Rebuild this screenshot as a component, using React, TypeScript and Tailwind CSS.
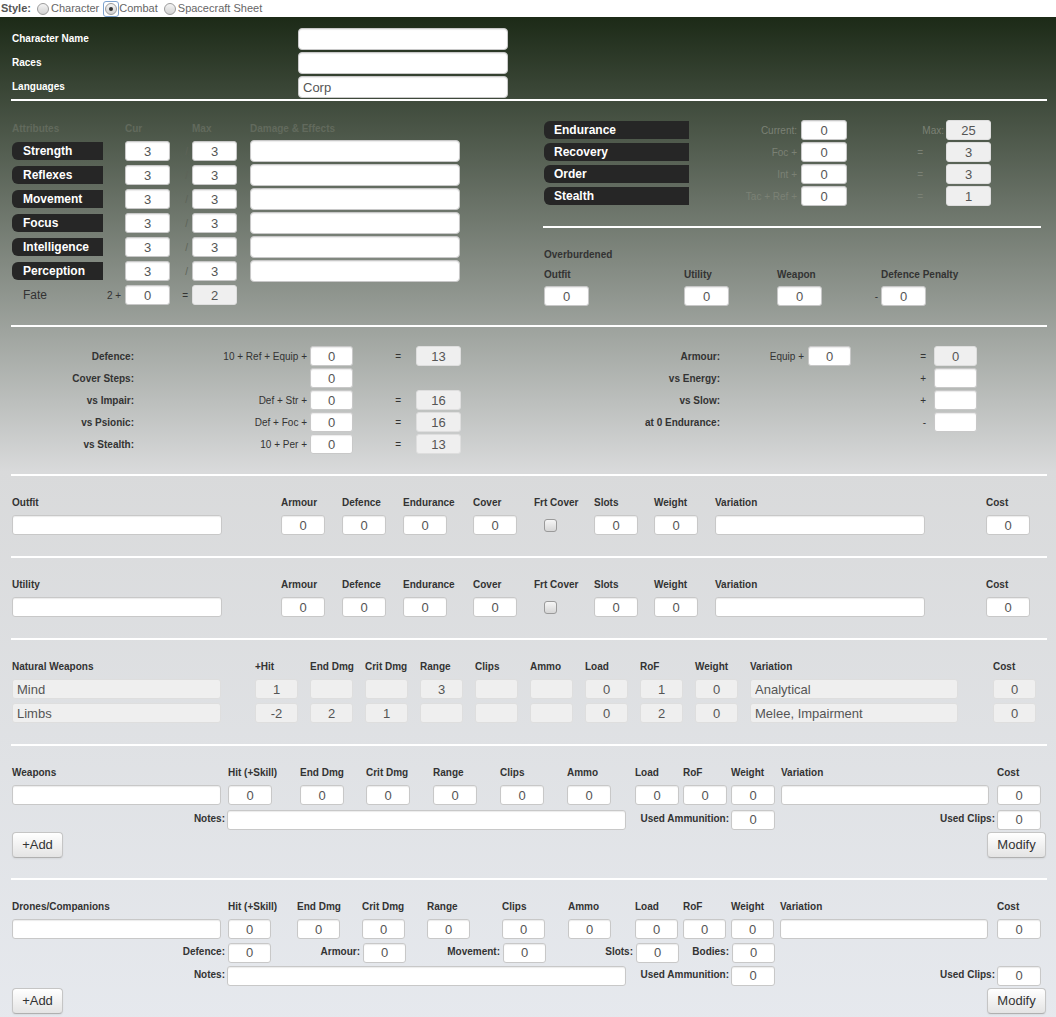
import React from "react";

const base = "h-[20px] shrink-0 rounded-[3px] border text-[13px] text-[#555] outline-none";
const whiteBox = "border-[#c8c8c8] bg-white shadow-[inset_0_1px_1px_rgba(0,0,0,0.08)]";
const roBox = "border-[#dedede] bg-[#efefef]";

type BoxProps = { v?: string; w?: string; ro?: boolean; left?: boolean; tall?: boolean };

function Box({ v = "0", w = "w-[44px]", ro = false, left = false, tall = false }: BoxProps) {
  return (
    <input
      defaultValue={v}
      readOnly={ro}
      className={`${base} ${ro ? roBox : whiteBox} ${w} ${left ? "px-[4px] text-left" : "text-center"} ${tall ? "h-[22px] rounded-[4px]" : ""}`}
    />
  );
}

function Line() {
  return <div className="ml-[-1px] h-[2px] bg-white" />;
}

function Pill({ children, w }: { children: React.ReactNode; w: string }) {
  return (
    <div className={`${w} h-[18px] shrink-0 rounded-l-[6px] bg-[#262626] text-[12px] font-bold leading-[18px] text-white`}>
      {children}
    </div>
  );
}

function Radio({ on = false }: { on?: boolean }) {
  return (
    <span
      className={`ml-[5px] mr-[1px] flex h-[14px] w-[14px] items-center justify-center ${on ? "rounded-[2px] outline outline-1 outline-[#7da2ce]" : ""}`}
    >
      <span className="flex h-[12px] w-[12px] items-center justify-center rounded-full border border-[#9c9c9c] bg-linear-to-b from-[#f4f4f4] to-[#d2d2d2]">
        {on && <span className="h-[4px] w-[4px] rounded-full bg-[#333]" />}
      </span>
    </span>
  );
}

function Btn({ children, w }: { children: React.ReactNode; w: string }) {
  return (
    <button
      className={`${w} h-[26px] rounded-[4px] border border-[#c5c5c5] border-b-[#b0b0b0] bg-linear-to-b from-white to-[#e4e4e4] text-[13px] text-[#333] shadow-[0_1px_2px_rgba(0,0,0,0.06)]`}
    >
      {children}
    </button>
  );
}

const head = "text-[10px] font-bold leading-[12px] text-[#333]";

const attrs = ["Strength", "Reflexes", "Movement", "Focus", "Intelligence", "Perception"];

const derived = [
  { name: "Endurance", label: "Current:", v: "0", mid: "Max:", res: "25" },
  { name: "Recovery", label: "Foc +", v: "0", mid: "=", res: "3" },
  { name: "Order", label: "Int +", v: "0", mid: "=", res: "3" },
  { name: "Stealth", label: "Tac + Ref +", v: "0", mid: "=", res: "1" },
];

const defLeft = [
  { l: "Defence:", f: "10 + Ref + Equip +", r: "13" },
  { l: "Cover Steps:", f: "", r: "" },
  { l: "vs Impair:", f: "Def + Str +", r: "16" },
  { l: "vs Psionic:", f: "Def + Foc +", r: "16" },
  { l: "vs Stealth:", f: "10 + Per +", r: "13" },
];

const defRight = [
  { l: "Armour:", equip: true, s: "=", r: "0" },
  { l: "vs Energy:", equip: false, s: "+", r: "" },
  { l: "vs Slow:", equip: false, s: "+", r: "" },
  { l: "at 0 Endurance:", equip: false, s: "-", r: "" },
];

const natural = [
  ["Mind", "1", "", "", "3", "", "", "0", "1", "0", "Analytical", "0"],
  ["Limbs", "-2", "2", "1", "", "", "", "0", "2", "0", "Melee, Impairment", "0"],
];

function Gear({ title }: { title: string }) {
  const cols = ["Armour", "Defence", "Endurance", "Cover"];
  return (
    <div className="pb-[21px] pt-[21px]">
      <div className="grid grid-cols-[269px_61px_61px_70px_61px_60px_60px_61px_271px_44px] gap-y-[6px]">
        <div className={head}>{title}</div>
        {cols.map((c) => (
          <div key={c} className={head}>{c}</div>
        ))}
        <div className={head}>Frt Cover</div>
        <div className={head}>Slots</div>
        <div className={head}>Weight</div>
        <div className={head}>Variation</div>
        <div className={head}>Cost</div>
        <Box v="" w="w-[210px]" />
        {cols.map((c) => (
          <Box key={c} />
        ))}
        <div className="flex h-[20px] items-center">
          <span className="ml-[10px] h-[13px] w-[13px] rounded-[3px] border border-[#9a9a9a] bg-linear-to-b from-[#f6f6f6] to-[#d6d6d6]" />
        </div>
        <Box />
        <Box />
        <Box v="" w="w-[210px]" />
        <Box />
      </div>
    </div>
  );
}

function NotesRow() {
  return (
    <div className="flex h-[20px] items-center">
      <span className={`${head} w-[213px] text-right`}>Notes:</span>
      <span className="ml-[2px]"><Box v="" w="w-[399px]" /></span>
      <span className={`${head} w-[103px] text-right`}>Used Ammunition:</span>
      <span className="ml-[2px]"><Box /></span>
      <span className={`${head} w-[220px] text-right`}>Used Clips:</span>
      <span className="ml-[2px]"><Box /></span>
    </div>
  );
}

export default function App() {
  return (
    <div className="min-h-screen bg-white font-['Liberation_Sans',Arial,sans-serif]">
      {/* style switch */}
      <div className="flex h-[17px] items-center pl-[1px] text-[11px] text-[#666]">
        <span className="font-bold text-[#555]">Style:</span>
        <Radio />
        <span>Character</span>
        <Radio on />
        <span>Combat</span>
        <Radio />
        <span>Spacecraft Sheet</span>
      </div>

      <div className="bg-[linear-gradient(to_bottom,#1c2a17_0%,#d9dadb_45%,#e6e9ee_100%)] pb-[14px] pl-[12px] pr-[9px]">
        {/* identity */}
        <div className="flex flex-col gap-[2px] pt-[11px]">
          {[
            ["Character Name", ""],
            ["Races", ""],
            ["Languages", "Corp"],
          ].map(([l, v]) => (
            <div key={l} className="flex items-center">
              <span className="mt-[-1px] w-[286px] text-[10px] font-bold text-white">{l}</span>
              <Box v={v} w="w-[210px]" left tall />
            </div>
          ))}
        </div>
        <div className="mt-[1px]">
          <Line />
        </div>

        {/* attributes + derived */}
        <div className="flex">
          <div className="w-[532px] shrink-0 pt-[19px]">
            <div className="flex h-[16px] items-center text-[10px] font-bold text-[#626a5d]">
              <span className="w-[113px]">Attributes</span>
              <span className="w-[67px]">Cur</span>
              <span className="w-[58px]">Max</span>
              <span>Damage &amp; Effects</span>
            </div>
            <div className="mt-[5px] flex flex-col gap-[4px]">
              {attrs.map((a) => (
                <div key={a} className="flex h-[20px] items-center">
                  <Pill w="w-[91px] pl-[11px]">{a}</Pill>
                  <span className="w-[22px]" />
                  <Box v="3" w="w-[45px]" />
                  <span className="flex w-[22px] justify-end pr-[4px] text-[10px] text-[#5d6358]">/</span>
                  <Box v="3" w="w-[45px]" />
                  <span className="w-[13px]" />
                  <Box v="" w="w-[210px]" tall />
                </div>
              ))}
              <div className="flex h-[20px] items-center">
                <span className="mt-[-1px] w-[95px] pl-[11px] text-[12px] text-[#333]">Fate</span>
                <span className="w-[18px] text-[10px] text-[#333]">2 +</span>
                <Box w="w-[45px]" />
                <span className="flex w-[22px] justify-end pr-[4px] text-[10px] text-[#333]">=</span>
                <Box v="2" w="w-[45px]" ro />
              </div>
            </div>
          </div>

          <div className="flex-1 pr-[6px] pt-[19px]">
            <div className="flex flex-col gap-[2px]">
              {derived.map((d) => (
                <div key={d.name} className="flex h-[20px] items-center">
                  <Pill w="w-[145px] pl-[10px]">{d.name}</Pill>
                  <span className="w-[112px] pr-[4px] text-right text-[10px] text-[#7b8175]">{d.label}</span>
                  <Box v={d.v} w="w-[46px]" />
                  <span
                    className={`w-[99px] text-right text-[10px] text-[#7b8175] ${d.mid === "=" ? "pr-[23px]" : "pr-[2px]"}`}
                  >
                    {d.mid}
                  </span>
                  <Box v={d.res} w="w-[45px]" ro />
                </div>
              ))}
            </div>
            <div className="mt-[20px]">
              <Line />
            </div>
            <div className={`${head} mt-[21px]`}>Overburdened</div>
            <div className="mt-[8px] flex">
              <span className={`${head} w-[140px]`}>Outfit</span>
              <span className={`${head} w-[93px]`}>Utility</span>
              <span className={`${head} w-[104px]`}>Weapon</span>
              <span className={head}>Defence Penalty</span>
            </div>
            <div className="mt-[5px] flex items-center">
              <Box w="w-[45px]" />
              <span className="w-[95px]" />
              <Box w="w-[45px]" />
              <span className="w-[48px]" />
              <Box w="w-[45px]" />
              <span className="w-[59px] pr-[3px] text-right text-[10px] text-[#333]">-</span>
              <Box w="w-[45px]" />
            </div>
          </div>
        </div>

        <div className="mt-[19px]">
          <Line />
        </div>

        {/* defence / armour */}
        <div className="flex flex-col gap-[2px] pb-[20px] pt-[19px]">
          {defLeft.map((d, i) => {
            const r = defRight[i];
            return (
              <div key={d.l} className="flex h-[20px] items-center text-[10px] text-[#333]">
                <span className="w-[122px] text-right font-bold">{d.l}</span>
                <span className="w-[176px] pr-[3px] text-right">{d.f}</span>
                <Box w="w-[43px]" />
                {d.r ? (
                  <>
                    <span className="w-[63px] pr-[15px] text-right">=</span>
                    <Box v={d.r} w="w-[45px]" ro />
                  </>
                ) : (
                  <span className="w-[108px]" />
                )}
                {r && (
                  <>
                    <span className="w-[259px] text-right font-bold">{r.l}</span>
                    {r.equip ? (
                      <>
                        <span className="w-[88px] pr-[4px] text-right">Equip +</span>
                        <Box w="w-[43px]" />
                      </>
                    ) : (
                      <span className="w-[131px]" />
                    )}
                    <span className="w-[83px] pr-[8px] text-right">{r.s}</span>
                    <Box v={r.r} w="w-[43px]" ro={r.equip} />
                  </>
                )}
              </div>
            );
          })}
        </div>
        <Line />

        <Gear title="Outfit" />
        <Line />
        <Gear title="Utility" />
        <Line />

        {/* natural weapons */}
        <div className="pb-[21px] pt-[21px]">
          <div className="grid grid-cols-[243px_55px_55px_55px_55px_55px_55px_55px_55px_55px_243px_43px] gap-y-[4px]">
            {["Natural Weapons", "+Hit", "End Dmg", "Crit Dmg", "Range", "Clips", "Ammo", "Load", "RoF", "Weight", "Variation", "Cost"].map((h) => (
              <div key={h} className={`${head} mb-[2px]`}>{h}</div>
            ))}
            {natural.map((row) =>
              row.map((c, j) => (
                <Box
                  key={row[0] + j}
                  v={c}
                  ro
                  left={j === 0 || j === 10}
                  w={j === 0 ? "w-[209px]" : j === 10 ? "w-[208px]" : "w-[43px]"}
                />
              ))
            )}
          </div>
        </div>
        <Line />

        {/* weapons */}
        <div className="pb-[20px] pt-[21px]">
          <div className="grid grid-cols-[216px_72px_66px_67px_67px_67px_68px_48px_48px_50px_216px_44px] gap-y-[6px]">
            {["Weapons", "Hit (+Skill)", "End Dmg", "Crit Dmg", "Range", "Clips", "Ammo", "Load", "RoF", "Weight", "Variation", "Cost"].map((h) => (
              <div key={h} className={head}>{h}</div>
            ))}
            <Box v="" w="w-[209px]" />
            {Array.from({ length: 9 }).map((_, i) => (
              <Box key={i} />
            ))}
            <Box v="" w="w-[208px]" />
            <Box />
          </div>
          <div className="mt-[4px]">
            <NotesRow />
          </div>
          <div className="mt-[3px] flex justify-between pr-[1px]">
            <Btn w="w-[51px]">+Add</Btn>
            <Btn w="w-[59px]">Modify</Btn>
          </div>
        </div>
        <Line />

        {/* drones */}
        <div className="pt-[21px]">
          <div className="grid grid-cols-[216px_69px_65px_65px_75px_66px_67px_48px_48px_49px_217px_44px] gap-y-[6px]">
            {["Drones/Companions", "Hit (+Skill)", "End Dmg", "Crit Dmg", "Range", "Clips", "Ammo", "Load", "RoF", "Weight", "Variation", "Cost"].map((h) => (
              <div key={h} className={head}>{h}</div>
            ))}
            <Box v="" w="w-[209px]" />
            {Array.from({ length: 9 }).map((_, i) => (
              <Box key={i} w="w-[43px]" />
            ))}
            <Box v="" w="w-[208px]" />
            <Box />
          </div>
          <div className="mt-[3px] flex h-[20px] items-center">
            <span className={`${head} w-[213px] text-right`}>Defence:</span>
            <span className="ml-[3px]"><Box w="w-[43px]" /></span>
            <span className={`${head} w-[89px] text-right`}>Armour:</span>
            <span className="ml-[3px]"><Box w="w-[43px]" /></span>
            <span className={`${head} w-[94px] text-right`}>Movement:</span>
            <span className="ml-[3px]"><Box w="w-[43px]" /></span>
            <span className={`${head} w-[87px] text-right`}>Slots:</span>
            <span className="ml-[3px]"><Box w="w-[43px]" /></span>
            <span className={`${head} w-[50px] text-right`}>Bodies:</span>
            <span className="ml-[3px]"><Box w="w-[43px]" /></span>
          </div>
          <div className="mt-[3px]">
            <NotesRow />
          </div>
          <div className="mt-[3px] flex justify-between pr-[1px]">
            <Btn w="w-[51px]">+Add</Btn>
            <Btn w="w-[59px]">Modify</Btn>
          </div>
        </div>
      </div>
    </div>
  );
}
